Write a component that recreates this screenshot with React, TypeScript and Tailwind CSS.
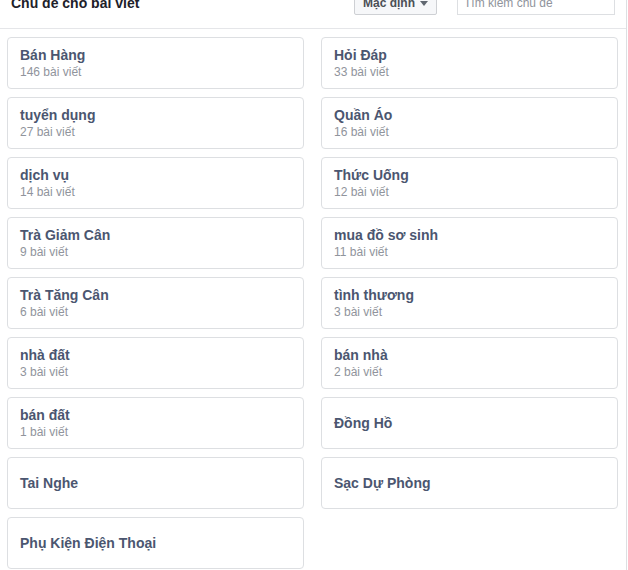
import React from 'react';

const topics: { name: string; count?: number }[] = [
    { name: 'Bán Hàng', count: 146 },
    { name: 'Hỏi Đáp', count: 33 },
    { name: 'tuyển dụng', count: 27 },
    { name: 'Quần Áo', count: 16 },
    { name: 'dịch vụ', count: 14 },
    { name: 'Thức Uống', count: 12 },
    { name: 'Trà Giảm Cân', count: 9 },
    { name: 'mua đồ sơ sinh', count: 11 },
    { name: 'Trà Tăng Cân', count: 6 },
    { name: 'tình thương', count: 3 },
    { name: 'nhà đất', count: 3 },
    { name: 'bán nhà', count: 2 },
    { name: 'bán đất', count: 1 },
    { name: 'Đồng Hồ' },
    { name: 'Tai Nghe' },
    { name: 'Sạc Dự Phòng' },
    { name: 'Phụ Kiện Điện Thoại' },
];

const App: React.FC = () => {
    return (
        <div className="w-[627px] h-[570px] overflow-hidden bg-white border-r border-[#dddfe2] font-['Liberation_Sans',Arial,sans-serif]">
            <header className="-mt-[22px] h-[51px] flex items-center border-b border-[#e5e6e9] pl-[11px] pr-[11px]">
                <h2 className="text-[14px] font-bold text-[#1d2129] flex-1">Chủ đề cho bài viết</h2>
                <button className="w-[83px] h-[24px] flex items-center justify-center gap-[5px] bg-[#f6f7f9] border border-[#ced0d4] rounded-[2px] text-[12px] font-bold text-[#4b4f56]">
                    Mặc định
                    <span className="w-0 h-0 border-l-[4px] border-r-[4px] border-t-[5px] border-l-transparent border-r-transparent border-t-[#606770]" />
                </button>
                <input
                    placeholder="Tìm kiếm chủ đề"
                    className="ml-[20px] w-[158px] h-[24px] border border-[#dddfe2] px-[6px] text-[12px] text-[#1d2129] placeholder:text-[#90949c] outline-none"
                />
            </header>

            <div className="grid grid-cols-2 gap-x-[17px] gap-y-[8px] pt-[8px] pl-[7px] pr-[8px]">
                {topics.map((t) => (
                    <div key={t.name} className="h-[52px] border border-[#dddfe2] rounded-[4px] px-[12px] flex flex-col justify-center">
                        <span className="text-[14px] leading-[18px] font-bold text-[#4b5670]">{t.name}</span>
                        {t.count !== undefined && (
                            <span className="text-[12px] leading-[16px] text-[#90949c]">{t.count} bài viết</span>
                        )}
                    </div>
                ))}
            </div>
        </div>
    );
};

export default App;
